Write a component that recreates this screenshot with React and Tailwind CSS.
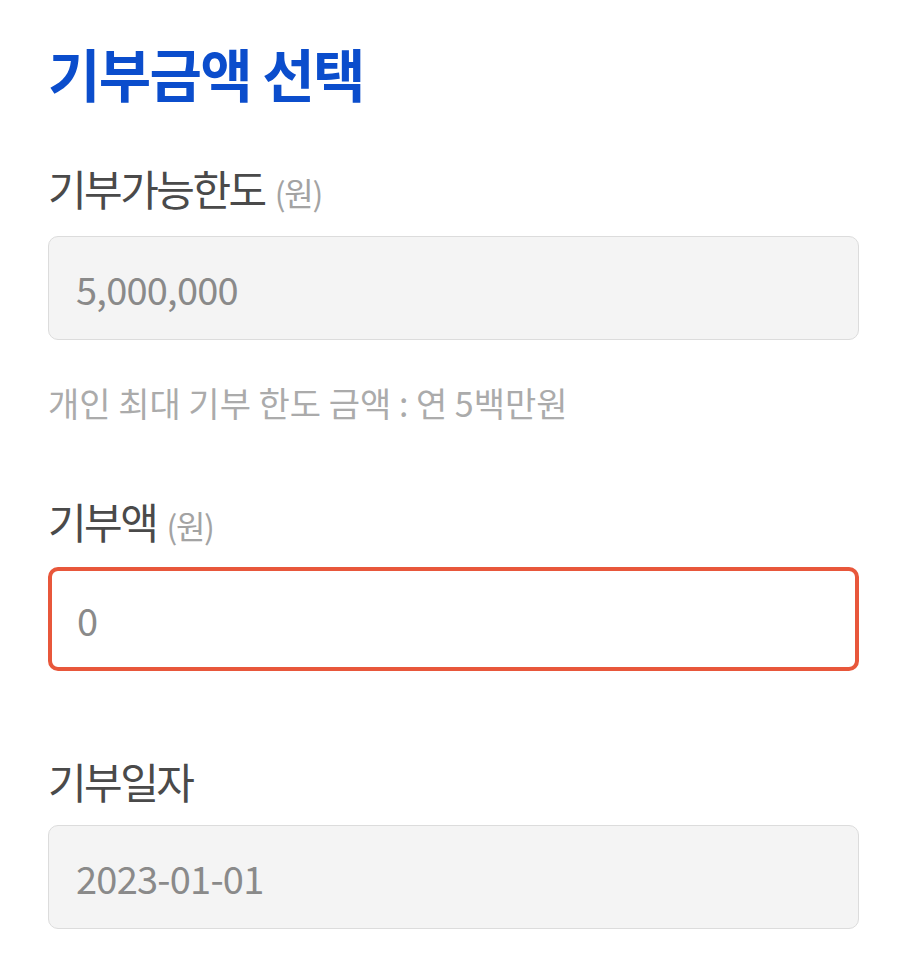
import React from "react";

const font = { fontFamily: '"Noto Sans CJK KR", "Noto Sans", sans-serif' };

function Field({ label, unit, value, active, className }) {
  return (
    <div className={className}>
      <div className="text-[42px] leading-[48px] tracking-[-0.06em] text-[#4a4a4a]">
        {label}
        {unit && <span className="ml-[10px] text-[32px] tracking-[-0.04em] text-[#a3a3a3]">{unit}</span>}
      </div>
      <input
        readOnly
        defaultValue={value}
        className={
          active
            ? "mt-[18px] block w-full h-[104px] rounded-[10px] border-4 border-[#e8573b] bg-white pl-[25px] text-[38px] tracking-[-0.02em] text-[#8a8a8a] outline-none"
            : "mt-[20px] block w-full h-[104px] rounded-[10px] border border-[#dcdcdc] bg-[#f4f4f4] pl-[27px] text-[38px] tracking-[-0.02em] text-[#8a8a8a] outline-none"
        }
      />
    </div>
  );
}

export default function App() {
  return (
    <div className="min-h-[970px] bg-white pl-[48px] pr-[49px] pt-[40px]" style={font}>
      <h1 className="text-[57px] leading-[64px] font-bold tracking-[-0.03em] text-[#0b4dcc]">기부금액 선택</h1>

      <Field className="mt-[60px]" label="기부가능한도" unit="(원)" value="5,000,000" />

      <p className="mt-[43px] text-[34px] leading-[40px] text-[#ababab]">
        개인 최대 기부 한도 금액 : 연 5백만원
      </p>

      <Field className="mt-[74px]" label="기부액" unit="(원)" value="0" active />

      <Field className="mt-[86px]" label="기부일자" value="2023-01-01" />
    </div>
  );
}
